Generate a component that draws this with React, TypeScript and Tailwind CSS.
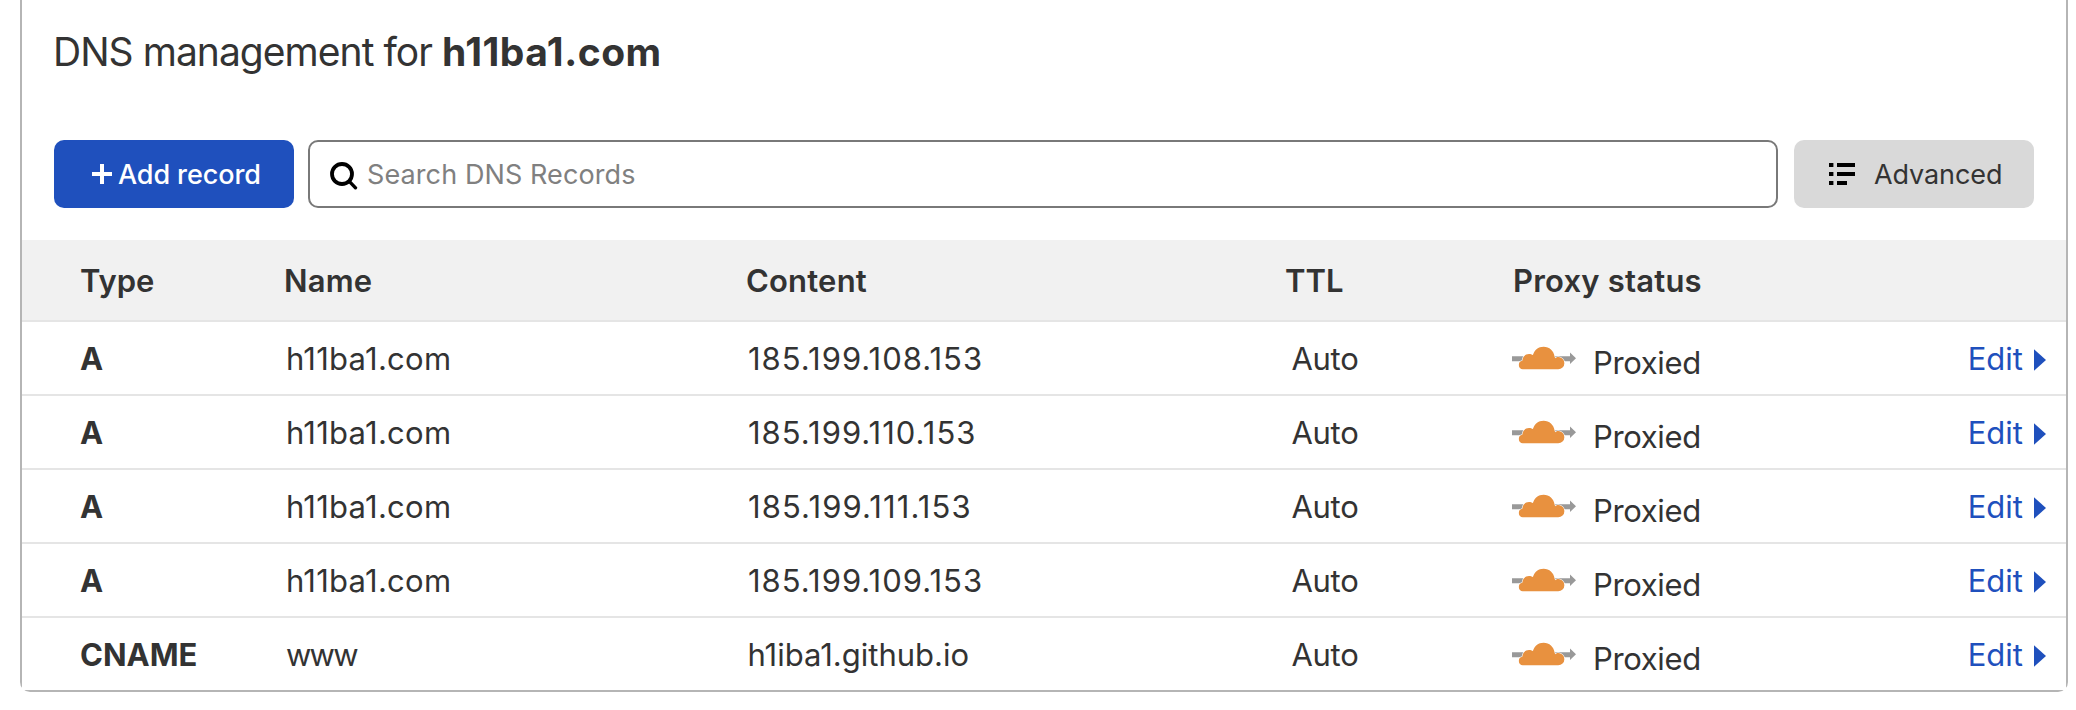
type DnsRecord = {
  type: string;
  name: string;
  nameClass: string;
  content: string;
  contentClass: string;
};

const hostClass = "tracking-[0.25px]";
const ipClass = "pl-[2px] tracking-[1px]";

const records: DnsRecord[] = [
  { type: "A", name: "h11ba1.com", nameClass: hostClass, content: "185.199.108.153", contentClass: ipClass },
  { type: "A", name: "h11ba1.com", nameClass: hostClass, content: "185.199.110.153", contentClass: ipClass },
  { type: "A", name: "h11ba1.com", nameClass: hostClass, content: "185.199.111.153", contentClass: "pl-[2px] tracking-[1.1px]" },
  { type: "A", name: "h11ba1.com", nameClass: hostClass, content: "185.199.109.153", contentClass: ipClass },
  { type: "CNAME", name: "www", nameClass: "tracking-[-1.8px]", content: "h1iba1.github.io", contentClass: "pl-[1.5px]" },
];

const columns = "grid grid-cols-[204px_462px_540px_225px_1fr] items-center pl-[58px] pr-5";

function ProxyIcon() {
  return (
    <svg width="64" height="26" viewBox="0 0 64 26" className="shrink-0">
      <path d="M0 11.2H58V7.6L64 13.3L58 19V16.2H0Z" fill="#999999" />
      <path
        d="M10.8 24.3A4.3 4.3 0 0 1 10.3 15.8C10.7 11.5 13.5 9 17 9C18.6 9 19.8 9.4 20.9 10.1C22.2 5.2 26.3 1.7 31.6 1.7C37.4 1.7 41.8 5.8 42.6 11.4C42.7 12.2 42.9 12.9 43.4 13.2C44.2 12.3 45.2 12 46.2 12A6.1 6.1 0 0 1 46.2 24.3Z"
        fill="#e8913f"
        stroke="#ffffff"
        strokeWidth="1.2"
        paintOrder="stroke"
      />
    </svg>
  );
}

function PlusIcon() {
  return (
    <svg width="20" height="20" viewBox="0 0 20 20" fill="#ffffff">
      <path d="M8 0H12V8H20V12H12V20H8V12H0V8H8Z" />
    </svg>
  );
}

function SearchIcon() {
  return (
    <svg width="28" height="28" viewBox="0 0 28 28" fill="none" stroke="#000000">
      <circle cx="12" cy="12" r="10" strokeWidth="3.8" />
      <path d="M19.3 19.3L25.5 25.8" strokeWidth="3.4" strokeLinecap="round" />
    </svg>
  );
}

function ListIcon() {
  return (
    <svg width="26" height="22" viewBox="0 0 26 22" fill="#000000">
      <path d="M0 0H4.4V4H0ZM8 0H26V4H8ZM0 9H4.4V13H0ZM8 9H26V13H8ZM0 18H4.4V22H0ZM8 18H18V22H8Z" />
    </svg>
  );
}

function RecordRow({ record, last }: { record: DnsRecord; last: boolean }) {
  return (
    <div
      className={
        last
          ? `${columns} h-[72px] bg-white`
          : `${columns} h-[74px] border-b-2 border-[#e5e5e5] bg-white`
      }
    >
      <span className="pt-px font-bold">{record.type}</span>
      <span className={`pt-px pl-[2px] ${record.nameClass}`}>{record.name}</span>
      <span className={`pt-px ${record.contentClass}`}>{record.content}</span>
      <span className="pt-px pl-[5.5px] tracking-[-0.3px]">Auto</span>
      <div className="flex items-center justify-between pl-px">
        <div className="flex items-center gap-[17px]">
          <ProxyIcon />
          <span className="pt-[9px] tracking-[-0.35px]">Proxied</span>
        </div>
        <a href="#" className="flex items-center gap-[11px] pt-px text-[#1f50bd]">
          Edit
          <svg width="12" height="22" viewBox="0 0 12 22" fill="#1f50bd" className="mt-[3px]">
            <path d="M0 0.3L12 11L0 21.7Z" />
          </svg>
        </a>
      </div>
    </div>
  );
}

export default function App() {
  return (
    <div className="h-[710px] w-[2076px] overflow-hidden bg-white pr-2 pl-5 font-['Inter',sans-serif] text-[31px] leading-[40px] text-[#333333]">
      <section className="h-[692px] rounded-b-[10px] border-x-2 border-b-2 border-[#b5b5b5]">
        <div className="h-60 px-8 pt-8">
          <h1 className="-ml-px text-[39px] leading-[40px] whitespace-pre">
            <span className="tracking-[-0.96px]">DNS management for </span>
            <span className="font-bold tracking-[0.5px]">h11ba1.com</span>
          </h1>
          <div className="mt-[68px] flex h-[68px] text-[27px]">
            <button className="flex w-60 items-center gap-[6px] rounded-[10px] bg-[#1f50bd] pl-[38px] font-medium tracking-[-0.1px] text-white">
              <PlusIcon />
              <span className="pt-[2px]">Add record</span>
            </button>
            <label className="ml-[14px] flex flex-1 items-center gap-[9px] rounded-[10px] border-2 border-[#797979] pl-5 tracking-[0.1px] text-[#808080]">
              <span className="pt-[3px]">
                <SearchIcon />
              </span>
              <span className="pt-[2px]">Search DNS Records</span>
            </label>
            <button className="ml-4 flex w-60 items-center gap-[19px] rounded-[10px] bg-[#d9d9d9] pl-[35px] tracking-[-0.1px]">
              <ListIcon />
              <span className="pt-[2px]">Advanced</span>
            </button>
          </div>
        </div>
        <div className={`${columns} h-[82px] border-b-2 border-[#e5e5e5] bg-[#f1f1f1] font-semibold`}>
          <span className="pt-px">Type</span>
          <span className="pt-px tracking-[0.2px]">Name</span>
          <span className="pt-px tracking-[0.2px]">Content</span>
          <span className="-ml-px pt-px">TTL</span>
          <span className="pt-px pl-[2px] tracking-[0.2px]">Proxy status</span>
        </div>
        {records.map((record, i) => (
          <RecordRow key={record.content} record={record} last={i === records.length - 1} />
        ))}
      </section>
    </div>
  );
}
